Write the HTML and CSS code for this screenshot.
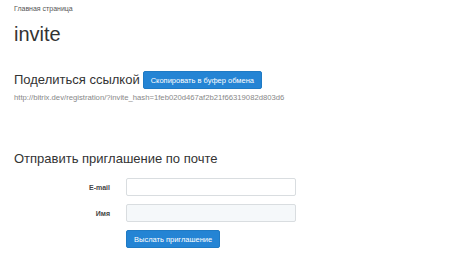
FILE: index.html
```html
<!DOCTYPE html>
<html>
<head>
  <title>invite</title>
  <link rel="stylesheet" href="styles.css">
</head>
<body>
  <div class="page">
    <div class="breadcrumb">Главная страница</div>
    <h1 class="title">invite</h1>

    <div class="share">
      <h2 class="share-title">Поделиться ссылкой</h2>
      <button class="btn">Скопировать в буфер обмена</button>
    </div>
    <div class="link">http://bitrix.dev/registration/?invite_hash=1feb020d467af2b21f66319082d803d6</div>

    <h2 class="mail-title">Отправить приглашение по почте</h2>
    <form class="mail-form">
      <div class="row">
        <label class="label">E-mail</label>
        <input class="field" type="text">
      </div>
      <div class="row">
        <label class="label">Имя</label>
        <input class="field field-grey" type="text">
      </div>
      <div class="row">
        <span class="label"></span>
        <button type="submit" class="btn">Выслать приглашение</button>
      </div>
    </form>
  </div>
</body>
</html>
```

FILE: styles.css
```css
* {
	margin: 0;
	padding: 0;
	box-sizing: border-box;
}

body {
	font-family: "Liberation Sans", Arial, sans-serif;
	color: #333333;
	background-color: #ffffff;
}

.page {
	padding: 4px 14px 0 14px;
}

.breadcrumb {
	font-size: 7px;
	color: #555555;
	line-height: 10px;
}

.title {
	font-size: 20px;
	font-weight: 400;
	line-height: 24px;
	margin-top: 8px;
}

.share {
	display: flex;
	align-items: center;
	margin-top: 25px;
}

.share-title {
	font-size: 13px;
	font-weight: 400;
	line-height: 18px;
	margin-right: 3px;
}

.btn {
	background-color: #2484d4;
	border: 1px solid #1f7ac4;
	border-radius: 2px;
	color: #ffffff;
	font-family: "Liberation Sans", Arial, sans-serif;
	font-size: 7.5px;
	height: 18px;
	padding: 0 7px;
	cursor: pointer;
}

.link {
	font-size: 7.7px;
	color: #888888;
	margin-top: 4px;
	line-height: 10px;
}

.mail-title {
	font-size: 13px;
	font-weight: 400;
	line-height: 18px;
	margin-top: 47px;
}

.mail-form {
	margin-top: 10px;
}

.row {
	display: flex;
	align-items: center;
	margin-bottom: 8px;
}

.label {
	width: 112px;
	padding-right: 16px;
	text-align: right;
	font-size: 7px;
	font-weight: bold;
	color: #444444;
}

.field {
	width: 170px;
	height: 18px;
	border: 1px solid #d9dde0;
	border-radius: 2px;
	background-color: #ffffff;
}

.field-grey {
	background-color: #f5f8fa;
}
```
